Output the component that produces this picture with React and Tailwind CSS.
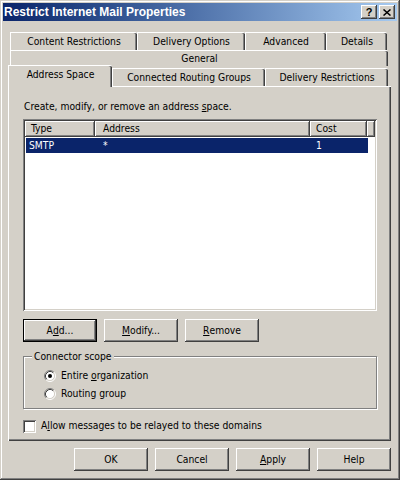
const raised =
  "bg-[#d4d0c8] shadow-[inset_-1px_-1px_0_#404040,inset_1px_1px_0_#ffffff,inset_-2px_-2px_0_#808080,inset_2px_2px_0_#d4d0c8]";
const defRaised =
  "bg-[#d4d0c8] shadow-[inset_0_0_0_1px_#000000,inset_-2px_-2px_0_#404040,inset_2px_2px_0_#ffffff,inset_-3px_-3px_0_#808080]";
const sunken =
  "shadow-[inset_1px_1px_0_#808080,inset_-1px_-1px_0_#ffffff,inset_2px_2px_0_#404040,inset_-2px_-2px_0_#d4d0c8]";
const tab =
  "flex items-center justify-center border-l border-t border-white rounded-tr-[2px] shadow-[inset_-1px_0_0_#404040,inset_-2px_0_0_#808080]";

function Button({ children, def }) {
  return (
    <div className={`w-[74px] h-[23px] flex items-center justify-center ${def ? defRaised : raised}`}>
      {children}
    </div>
  );
}

function Radio({ checked, children }) {
  return (
    <div className="h-[16px] flex items-center">
      <svg width="12" height="12" viewBox="0 0 12 12" className="ml-[20px]">
        <circle cx="6" cy="6" r="4.5" fill="#ffffff" />
        <path d="M9.89 2.11 A5.5 5.5 0 0 0 2.11 9.89" stroke="#808080" fill="none" />
        <path d="M9.89 2.11 A5.5 5.5 0 0 1 2.11 9.89" stroke="#ffffff" fill="none" />
        <path d="M9.18 2.82 A4.5 4.5 0 0 0 2.82 9.18" stroke="#404040" fill="none" />
        <path d="M9.18 2.82 A4.5 4.5 0 0 1 2.82 9.18" stroke="#d4d0c8" fill="none" />
        {checked && <circle cx="6" cy="6" r="2" fill="#000000" />}
      </svg>
      <span className="ml-[5px]">{children}</span>
    </div>
  );
}

function HeadCell({ w, children }) {
  return (
    <div className={`${w} h-[16px] flex items-center ${raised}`}>
      <span className="pl-[6px]">{children}</span>
    </div>
  );
}

export default function App() {
  return (
    <div className="w-[400px] h-[480px] p-[3px] bg-[#d4d0c8] text-[10.25px] text-black font-['DejaVu_Sans_Condensed','Liberation_Sans',sans-serif] shadow-[inset_-1px_-1px_0_#404040,inset_1px_1px_0_#d4d0c8,inset_-2px_-2px_0_#808080,inset_2px_2px_0_#ffffff] overflow-hidden">
      {/* title bar */}
      <div className="h-[18px] flex items-center justify-between bg-linear-to-r from-[#0a246a] to-[#a6caf0] pl-[1px] pr-[2px]">
        <span className="text-white font-bold text-[12px] font-['Liberation_Sans',sans-serif]">
          Restrict Internet Mail Properties
        </span>
        <div className="flex">
          <div className={`w-[16px] h-[14px] flex items-center justify-center font-bold text-[11px] font-['Liberation_Sans',sans-serif] ${raised}`}>
            ?
          </div>
          <div className={`w-[16px] h-[14px] ml-[2px] flex items-center justify-center ${raised}`}>
            <svg width="8" height="7" viewBox="0 0 8 7">
              <path d="M0.5 0.5 L7.5 6.5 M7.5 0.5 L0.5 6.5" stroke="#000000" strokeWidth="1.5" />
            </svg>
          </div>
        </div>
      </div>

      <div className="pl-[5px] mt-[11px]">
        {/* tab rows */}
        <div className="flex ml-[2px] h-[18px]">
          <div className={`${tab} w-[127px]`}>Content Restrictions</div>
          <div className={`${tab} w-[108px]`}>Delivery Options</div>
          <div className={`${tab} w-[81px]`}>Advanced</div>
          <div className={`${tab} w-[61px]`}>Details</div>
        </div>
        <div className={`${tab} ml-[2px] w-[378px] h-[16px]`}>General</div>
        <div className="flex items-end h-[20px]">
          <div className={`${tab} relative z-10 w-[104px] h-[22px] -mb-[1px] bg-[#d4d0c8] pb-[3px]`}>
            Address Space
          </div>
          <div className={`${tab} w-[153px] h-[18px]`}>Connected Routing Groups</div>
          <div className={`${tab} w-[123px] h-[18px]`}>Delivery Restrictions</div>
        </div>

        {/* panel */}
        <div className="w-[383px] h-[355px] pl-[15px] pr-[14px] pt-[14px] shadow-[inset_1px_1px_0_#ffffff,inset_-1px_-1px_0_#404040,inset_-2px_-2px_0_#808080]">
          <div className="pl-[1px] h-[13px] leading-[13px]">
            Create, modify, or remove an address <span className="underline">s</span>pace.
          </div>

          <div className={`mt-[6px] h-[192px] bg-white p-[2px] ${sunken}`}>
            <div className="flex">
              <HeadCell w="w-[70px]">Type</HeadCell>
              <HeadCell w="w-[215px]">
                <span className="pl-[2px]">Address</span>
              </HeadCell>
              <HeadCell w="w-[57px]">Cost</HeadCell>
              <HeadCell w="w-[8px]" />
            </div>
            <div className="flex mt-[1px] h-[15px] w-[342px] ml-[1px] items-center bg-[#0a246a] text-white">
              <span className="w-[69px] pl-[3px]">SMTP</span>
              <span className="w-[215px] pl-[8px]">*</span>
              <span className="pl-[6px]">1</span>
            </div>
          </div>

          <div className="flex gap-[7px] mt-[8px]">
            <Button def>
              A<span className="underline">d</span>d...
            </Button>
            <Button>
              <span className="underline">M</span>odify...
            </Button>
            <Button>
              <span className="underline">R</span>emove
            </Button>
          </div>

          <fieldset className="mt-[8px] h-[59px] border border-[#808080] shadow-[inset_1px_1px_0_#ffffff,1px_1px_0_#ffffff] pl-[4px]">
            <legend className="ml-[4px] px-[2px] bg-[#d4d0c8] leading-[13px]">Connector scope</legend>
            <div className="mt-[5px] flex flex-col gap-[2px] -ml-[4px]">
              <Radio checked>
                Entire <span className="underline">o</span>rganization
              </Radio>
              <Radio>Routing group</Radio>
            </div>
          </fieldset>

          <div className="flex items-center h-[16px] mt-[9px]">
            <div className={`w-[13px] h-[13px] bg-white ${sunken}`} />
            <span className="ml-[5px]">
              A<span className="underline">l</span>low messages to be relayed to these domains
            </span>
          </div>
        </div>

        {/* bottom buttons */}
        <div className="flex justify-end gap-[7px] mt-[7px] w-[383px]">
          <Button>OK</Button>
          <Button>Cancel</Button>
          <Button>
            <span className="underline">A</span>pply
          </Button>
          <Button>Help</Button>
        </div>
      </div>
    </div>
  );
}
